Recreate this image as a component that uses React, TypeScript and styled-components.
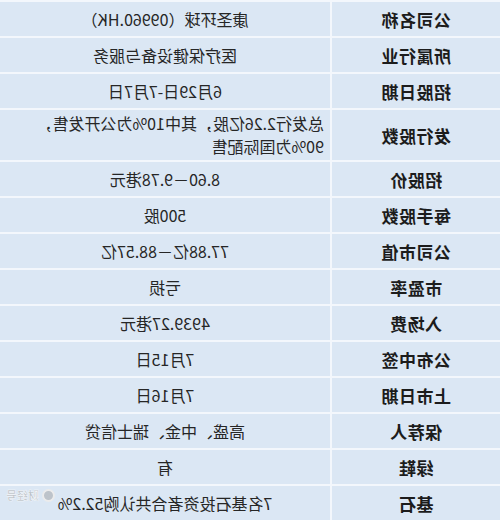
import React from "react";
import styled, { createGlobalStyle } from "styled-components";

const GlobalStyle = createGlobalStyle`
  html, body {
    margin: 0;
    padding: 0;
    background: #dbe7f4;
  }
`;

type Item = {
  label: string;
  value: React.ReactNode;
  tall?: boolean;
  left?: boolean;
};

const items: Item[] = [
  { label: "公司名称", value: "康圣环球（09960.HK）" },
  { label: "所属行业", value: "医疗保健设备与服务" },
  { label: "招股日期", value: "6月29日-7月7日" },
  {
    label: "发行股数",
    value: (
      <>
        总发行2.26亿股，其中10%为公开发售，
        <br />
        90%为国际配售
      </>
    ),
    tall: true,
    left: true,
  },
  { label: "招股价", value: "8.60－9.78港元" },
  { label: "每手股数", value: "500股" },
  { label: "公司市值", value: "77.88亿－88.57亿" },
  { label: "市盈率", value: "亏损" },
  { label: "入场费", value: "4939.27港元" },
  { label: "公布中签", value: "7月15日" },
  { label: "上市日期", value: "7月16日" },
  { label: "保荐人", value: "高盛、中金、瑞士信贷" },
  { label: "绿鞋", value: "有" },
  { label: "基石", value: "7名基石投资者合共认购52.2%" },
];

const App = () => {
  return (
    <React.Fragment>
      <GlobalStyle />
      {/* the source picture is mirrored left to right */}
      <Mirror>
        <Table>
          {items.map((item, i) => (
            <Row key={item.label} $tall={item.tall}>
              <Label>{item.label}</Label>
              <Value $left={item.left}>
                {item.value}
                {i === items.length - 1 && (
                  <Watermark aria-hidden>
                    <Ring />
                    财经号
                  </Watermark>
                )}
              </Value>
            </Row>
          ))}
        </Table>
      </Mirror>
    </React.Fragment>
  );
};

const Mirror = styled.div`
  width: 500px;
  height: 520px;
  overflow: hidden;
  transform: scaleX(-1);
  background: #dbe7f4;
`;

const Table = styled.div`
  display: flex;
  flex-direction: column;
  width: 100%;
`;

const Row = styled.div<{ $tall?: boolean }>`
  display: grid;
  grid-template-columns: 170px 1fr;
  height: ${({ $tall }) => ($tall ? "52px" : "36px")};
  border-top: 2px solid #f3f7fc;
  box-sizing: border-box;
`;

const Label = styled.div`
  display: flex;
  align-items: center;
  justify-content: center;
  border-right: 2px solid #f3f7fc;
  font-family: "Noto Sans CJK SC", "Noto Sans", sans-serif;
  font-size: 17px;
  font-weight: 700;
  color: #1c1c1c;
  letter-spacing: 0.5px;
`;

const Value = styled.div<{ $left?: boolean }>`
  position: relative;
  display: flex;
  align-items: center;
  justify-content: ${({ $left }) => ($left ? "flex-start" : "center")};
  padding: ${({ $left }) => ($left ? "0 0 0 6px" : "0")};
  font-family: "Noto Sans CJK SC", "Noto Sans", sans-serif;
  font-size: 16px;
  font-weight: 400;
  line-height: 23px;
  color: #262626;
  white-space: nowrap;
`;

const Watermark = styled.span`
  position: absolute;
  right: 6px;
  top: 2px;
  display: flex;
  align-items: center;
  gap: 3px;
  font-family: "Noto Sans CJK SC", sans-serif;
  font-size: 11px;
  line-height: 14px;
  font-weight: 700;
  color: rgba(150, 150, 150, 0.5);
  -webkit-text-stroke: 0.5px rgba(255, 255, 255, 0.8);
`;

const Ring = styled.span`
  width: 9px;
  height: 9px;
  border-radius: 50%;
  border: 2px solid rgba(240, 240, 240, 0.9);
  background: rgba(160, 160, 160, 0.5);
`;

export default App;
